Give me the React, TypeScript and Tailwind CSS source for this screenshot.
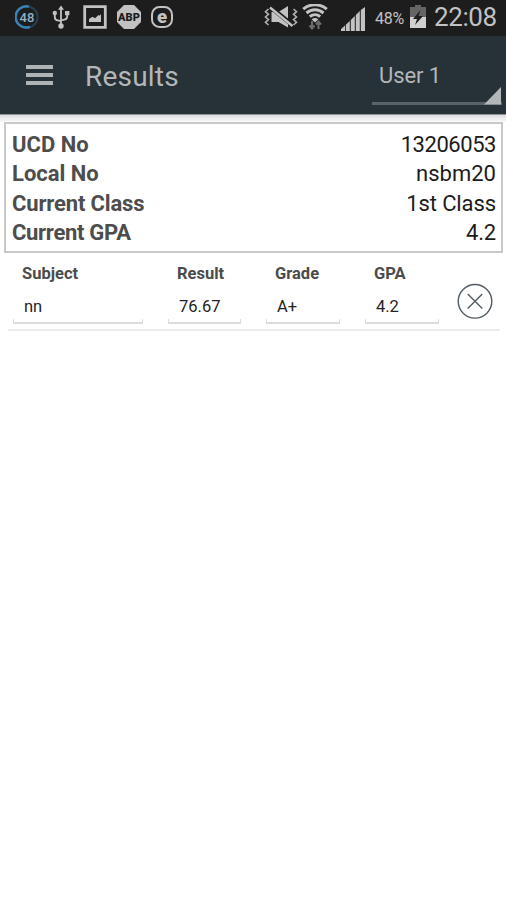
import React from "react";

interface SummaryItem {
  label: string;
  value: string;
  labelClass: string;
  valueClass: string;
}

interface ResultField {
  title: string;
  value: string;
  width: string;
}

const summary: SummaryItem[] = [
  { label: "UCD No", value: "13206053", labelClass: "", valueClass: "tracking-[-0.45px]" },
  { label: "Local No", value: "nsbm20", labelClass: "", valueClass: "" },
  { label: "Current Class", value: "1st Class", labelClass: "tracking-[-0.15px]", valueClass: "tracking-[-0.1px]" },
  { label: "Current GPA", value: "4.2", labelClass: "tracking-[-0.3px]", valueClass: "tracking-[-0.2px]" },
];

const fields: ResultField[] = [
  { title: "Subject", value: "nn", width: "w-[130px]" },
  { title: "Result", value: "76.67", width: "w-[73px]" },
  { title: "Grade", value: "A+", width: "w-[74px]" },
  { title: "GPA", value: "4.2", width: "w-[74px]" },
];

const BatteryCircleIcon = () => (
  <svg className="w-6 h-6" viewBox="0 0 24 24" fill="none">
    <circle cx="12" cy="12" r="10.6" stroke="#263f50" strokeWidth="2" />
    <path d="M15 21.8A10.6 10.6 0 1 1 14 1.7" stroke="#3984b8" strokeWidth="2.4" />
    <text x="12" y="16.6" textAnchor="middle" fontSize="13" fontWeight="500" fill="#8eb4cc">48</text>
  </svg>
);

const UsbIcon = () => (
  <svg className="w-[18px] h-6" viewBox="0 0 18 24" fill="none" stroke="#c2c2c2" strokeWidth="1.8">
    <path d="M9 3v17M2.8 8v4.2c0 2.2 1.2 3 3 3.2l3.2.8M15.2 8v3.4c0 2.2-1.2 3-3 3.3L9 15.5" />
    <path d="M6 4.8 9 .5l3 4.3z" fill="#c2c2c2" stroke="none" />
    <circle cx="9" cy="21" r="2.7" fill="#c2c2c2" stroke="none" />
    <circle cx="2.8" cy="8" r="2.2" fill="#c2c2c2" stroke="none" />
    <path d="M13 6h4.4v4.2H13z" fill="#c2c2c2" stroke="none" />
  </svg>
);

const PictureIcon = () => (
  <svg className="w-6 h-6" viewBox="0 0 24 24" fill="none">
    <path d="M1.7 1.7h20.6v20.6H1.7z" stroke="#c2c2c2" strokeWidth="2.8" />
    <path d="M6 17v-3l3.5-2.2 2.5 1.5 3.5-3.3 1 .8L18 9v8z" fill="#c2c2c2" />
  </svg>
);

const AdblockIcon = () => (
  <svg className="w-[26px] h-6" viewBox="0 0 26 24">
    <path d="M8 0h10l7 7v10l-7 7H8l-7-7V7z" fill="#c2c2c2" />
    <text x="13" y="16" textAnchor="middle" fontSize="11" fontWeight="900" fill="#1d1d1d">ABP</text>
  </svg>
);

const BrowserIcon = () => (
  <svg className="w-6 h-6 overflow-visible" viewBox="0 0 24 24" fill="none">
    <rect x="2" y="2" width="20" height="20" rx="7.5" stroke="#c2c2c2" strokeWidth="2" />
    <text x="12" y="17.6" textAnchor="middle" fontSize="18.5" fontWeight="900" fill="#c2c2c2">e</text>
  </svg>
);

const VibrateMuteIcon = () => (
  <svg className="w-[34px] h-[22px]" viewBox="0 0 34 22" fill="none">
    <path d="M7.5 6h7l9.5-6v21.5L14.5 16h-7z" fill="#c2c2c2" />
    <path d="m7 1.5 22 18" stroke="#1d1d1d" strokeWidth="4.4" />
    <path d="m6 1.5 22.5 18.5" stroke="#c2c2c2" strokeWidth="2.4" />
    <path d="m4.5 3-3 2.7 3 2.6-3 2.7 3 2.6-3 2.7 3 2.7M29.5 3l3 2.7-3 2.6 3 2.7-3 2.6 3 2.7-3 2.7" stroke="#b0b0b0" strokeWidth="1.6" />
  </svg>
);

const WifiIcon = () => (
  <svg className="w-[26px] h-[26px]" viewBox="0 0 26 26" fill="none">
    <path d="M1.2 5.2a18 18 0 0 1 23.6 0M4.5 9a13 13 0 0 1 17 0M7.8 12.6a8 8 0 0 1 10.4 0" stroke="#c2c2c2" strokeWidth="3" />
    <path d="M13 18.5 9.6 15.2q3.4-2.6 6.8 0z" fill="#c2c2c2" />
    <path d="M10 17v7M7.5 21.5l2.5 3 2.5-3M16.5 25v-7M14 20.5l2.5-3 2.5 3" stroke="#6c6c6c" strokeWidth="2" />
  </svg>
);

const SignalIcon = () => (
  <svg className="w-6 h-6" viewBox="0 0 24 24" fill="#c2c2c2">
    <path d="M0 24v-2l4-3.6V24zM4.8 24v-6.3l4-3.8V24zM9.8 24V12.9l4-4V24zM14.8 24V7.9l4-4V24zM19.8 24V3L24 0v24z" />
  </svg>
);

const BatteryIcon = () => (
  <svg className="w-4 h-[23px]" viewBox="0 0 16 23">
    <path d="M5 0h6v2h5v21H0V2h5z" fill="#656565" />
    <path d="M0 12h16v11H0z" fill="#d0d0d0" />
    <path d="M10.5 5 3 14h4l-2 6 8-9H8.5z" fill="#1d1d1d" />
  </svg>
);

const StatusBar = () => (
  <div className="flex h-9 justify-between bg-[#1d1d1d] text-[#c2c2c2]">
    <div className="flex items-start pt-[5px] pl-[15px]">
      <BatteryCircleIcon />
      <div className="ml-[13px]"><UsbIcon /></div>
      <div className="ml-[13px]"><PictureIcon /></div>
      <div className="ml-[9px]"><AdblockIcon /></div>
      <div className="ml-2"><BrowserIcon /></div>
    </div>
    <div className="flex items-start pr-[9px]">
      <div className="mt-[6px]"><VibrateMuteIcon /></div>
      <div className="mt-1 ml-1"><WifiIcon /></div>
      <div className="mt-[7px] ml-[13px]"><SignalIcon /></div>
      <span className="mt-[9px] ml-[10px] w-[30px] text-base leading-5 tracking-[-0.3px] whitespace-nowrap">48%</span>
      <div className="mt-[5px] ml-[5px]"><BatteryIcon /></div>
      <span className="ml-2 w-[63px] text-[26px] leading-[35px] tracking-[-0.4px]">22:08</span>
    </div>
  </div>
);

const AppBar = () => (
  <header className="flex h-[78px] bg-[#263138] text-[#b4b7b9]">
    <button className="mt-[29px] ml-[26px] flex h-5 w-[27px] flex-col justify-between" aria-label="Menu">
      <span className="h-1 w-full bg-[#b0b3b5]" />
      <span className="h-1 w-full bg-[#b0b3b5]" />
      <span className="h-1 w-full bg-[#b0b3b5]" />
    </button>
    <h1 className="ml-8 text-[28px] leading-[82px] tracking-[0.2px]">Results</h1>
    <div className="mt-3 mr-1 ml-auto flex h-[57px] w-[130px] justify-between border-b-[3px] border-[#59636a]">
      <span className="ml-[7px] text-[22px] leading-[56px] tracking-[-0.1px]">User 1</span>
      <svg className="-mb-[3px] h-[18px] w-[18px] self-end" viewBox="0 0 18 18">
        <path d="M0 17.5 17 0v17.5z" fill="#b4b7b9" />
      </svg>
    </div>
  </header>
);

const ResultRow = () => (
  <div className="mr-[6px] ml-2 flex h-[78px] border-b-2 border-[#ebebeb] pl-[5px]">
    <div className="flex gap-[25px]">
      {fields.map((field) => (
        <div key={field.title} className={field.width}>
          <div className="mt-[9px] pl-[9px] text-[16.5px] leading-6 font-bold text-[#4b4b4b]">{field.title}</div>
          <div className="mt-[9px] pl-[11px] text-[16.5px] leading-6 text-[#242424]">{field.value}</div>
          <div className="h-[5px] border-x border-b-2 border-[#dcdcdc]" />
        </div>
      ))}
    </div>
    <button className="mt-[30px] mr-[7px] ml-auto h-9 w-9" aria-label="Remove">
      <svg viewBox="0 0 36 36" fill="none" stroke="#515c64">
        <circle cx="18" cy="18.3" r="16.8" strokeWidth="1.4" />
        <path d="m10.7 11 14.6 14.6M25.3 11 10.7 25.6" strokeWidth="1.4" />
      </svg>
    </button>
  </div>
);

export default function App() {
  return (
    <div className="min-h-screen bg-white font-[Roboto,sans-serif]">
      <StatusBar />
      <AppBar />
      <div className="h-[8px] border-t border-[#8e969c] bg-linear-to-b from-[#dddde2] to-[#fafafa]" />
      <section className="mr-[3px] ml-1 h-[131px] border-2 border-[#c9c9c9] bg-white pt-[5.5px] pr-[5px] pl-[6px] text-[22px]">
        {summary.map((item) => (
          <div key={item.label} className="flex h-[29.5px] items-center justify-between">
            <span className={`font-bold text-[#4d4d4d] ${item.labelClass}`}>{item.label}</span>
            <span className={`text-[#1c1c1c] ${item.valueClass}`}>{item.value}</span>
          </div>
        ))}
      </section>
      <ResultRow />
    </div>
  );
}
